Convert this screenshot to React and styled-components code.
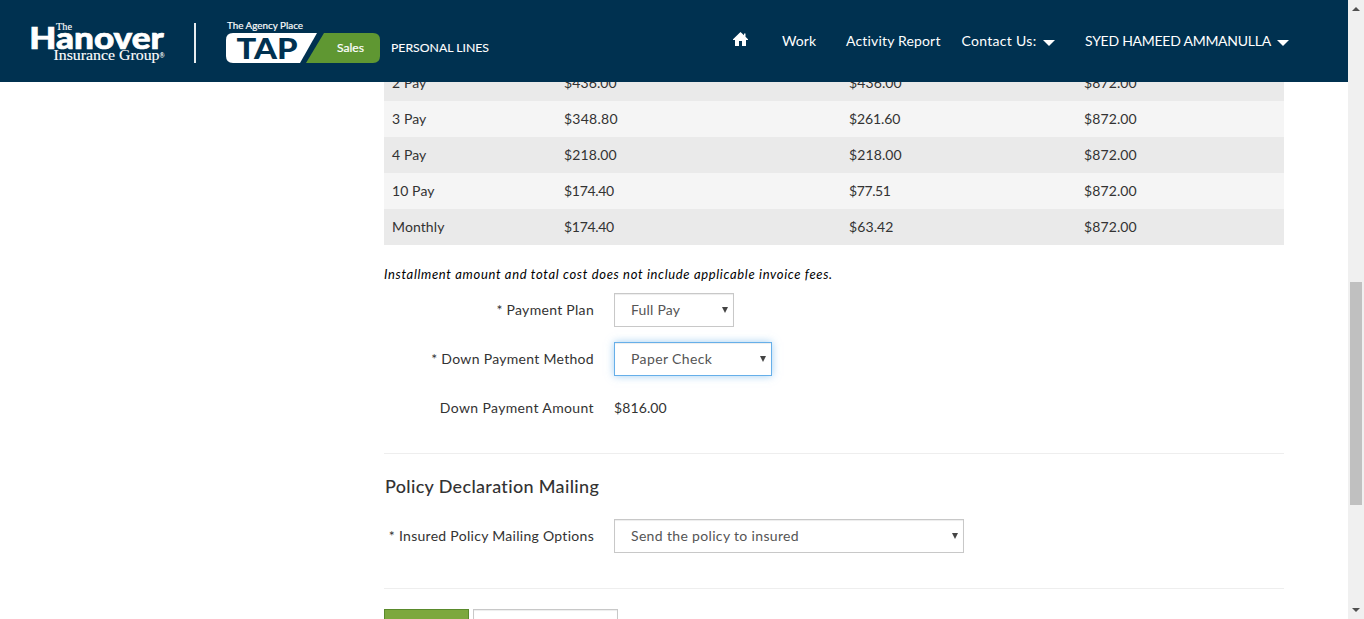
import React from 'react';
import styled, { createGlobalStyle } from 'styled-components';

const GlobalStyle = createGlobalStyle`
  * { box-sizing: border-box; }
  body {
    margin: 0;
    background: #fff;
    color: #333;
    font-family: Lato, "Liberation Sans", sans-serif;
    font-size: 14px;
    line-height: 20px;
    overflow: hidden;
  }
`;

const Viewport = styled.div`
  display: flex;
  height: 619px;
  overflow: hidden;
`;

const Page = styled.div`
  flex: 1;
  min-width: 0;
  height: 619px;
  overflow: hidden;
`;

const Header = styled.header`
  position: fixed;
  top: 0;
  left: 0;
  width: 1348px;
  height: 82px;
  z-index: 2;
  display: flex;
  justify-content: space-between;
  background: #003150;
`;

const Brand = styled.svg`
  flex: none;
`;

const Nav = styled.nav`
  display: flex;
  align-items: flex-start;
  padding: 31px 59px 0 0;
`;

const NavItem = styled.a`
  display: flex;
  align-items: center;
  width: ${(p) => p.$w}px;
  color: #fff;
  letter-spacing: ${(p) => p.$ls ?? 0.3}px;
  white-space: nowrap;
`;

const HomeIcon = styled.svg`
  display: block;
  margin-top: 1px;
`;

const Caret = styled.span`
  margin-left: auto;
  margin-right: ${(p) => p.$gap || 0}px;
  margin-top: 3px;
  border-top: 6px solid #fff;
  border-left: 6px solid transparent;
  border-right: 6px solid transparent;
`;

const Content = styled.main`
  width: 900px;
  margin: 65px 0 0 384px;
`;

const PlanRow = styled.div`
  display: grid;
  grid-template-columns: 172px 285px 235px 1fr;
  height: 36px;
  padding: 8px;
  background: ${(p) => (p.$dark ? '#eaeaea' : '#f5f5f5')};
`;

const Cell = styled.span`
  letter-spacing: ${(p) => p.$ls}px;
`;

const Note = styled.p`
  margin: 19px 0 9px;
  color: #000;
  font-size: 13px;
  font-style: italic;
  letter-spacing: ${(p) => p.$ls}px;
  white-space: nowrap;
`;

const Field = styled.div`
  display: flex;
  align-items: center;
  gap: 20px;
  height: 34px;
  margin-bottom: 15px;
`;

const Label = styled.label`
  width: 210px;
  text-align: right;
  letter-spacing: ${(p) => p.$ls}px;
  white-space: nowrap;
`;

const Value = styled.span`
  letter-spacing: 0.1px;
`;

const Select = styled.div`
  display: flex;
  align-items: center;
  justify-content: space-between;
  width: ${(p) => p.$w}px;
  height: 34px;
  padding: 0 5px 0 16px;
  color: #555;
  letter-spacing: ${(p) => p.$ls}px;
  background: #fff;
  border: 1px solid ${(p) => (p.$focus ? '#66afe9' : '#c8c8c8')};
  box-shadow: inset 0 1px 1px rgba(0, 0, 0, 0.075)${(p) =>
    p.$focus ? ', 0 0 8px rgba(102, 175, 233, 0.6)' : ''};
`;

const SelectArrow = styled.span`
  margin-top: -1px;
  border-top: 6px solid #444;
  border-left: 3px solid transparent;
  border-right: 3px solid transparent;
`;

const Divider = styled.hr`
  height: 1px;
  margin: ${(p) => p.$top}px 0 0;
  border: 0;
  background: #eee;
`;

const Title = styled.h3`
  margin: 20px 0 21px 1px;
  font-size: 18px;
  font-weight: 500;
  line-height: 24px;
  letter-spacing: ${(p) => p.$ls}px;
`;

const Actions = styled.div`
  display: flex;
  gap: 4px;
  margin-top: 20px;
`;

const Button = styled.button`
  width: ${(p) => p.$w}px;
  height: 34px;
  padding: 0;
  border: 1px solid ${(p) => (p.$primary ? '#5a8a2c' : '#c8c8c8')};
  background: ${(p) => (p.$primary ? '#7da83e' : '#fff')};
  box-shadow: ${(p) => (p.$primary ? 'none' : 'inset 0 1px 1px rgba(0, 0, 0, 0.075)')};
`;

const Scrollbar = styled.div`
  display: flex;
  flex-direction: column;
  width: 16px;
  height: 619px;
  background: #f0f0f0;
`;

const ScrollArrow = styled.svg`
  flex: none;
  display: block;
`;

const Thumb = styled.div`
  width: 12px;
  height: 223px;
  margin: 265px 2px auto;
  background: #c0c0c0;
`;

const plans = [
  ['2 Pay', '$436.00', '$436.00', '$872.00'],
  ['3 Pay', '$348.80', '$261.60', '$872.00'],
  ['4 Pay', '$218.00', '$218.00', '$872.00'],
  ['10 Pay', '$174.40', '$77.51', '$872.00'],
  ['Monthly', '$174.40', '$63.42', '$872.00'],
];

const amountSpacing = { '$348.80': 0.25, '$174.40': -0.3, '$77.51': -0.4, '$261.60': -0.1 };
const spacingOf = (amount) => amountSpacing[amount] ?? 0.1;

function Logo() {
  return (
    <Brand width="510" height="82" viewBox="0 0 510 82" fill="#fff">
      <g fontFamily="'Liberation Serif', serif" stroke="#fff" strokeWidth="0.12">
        <text x="56" y="29.5" fontSize="10.5" textLength="16" lengthAdjust="spacingAndGlyphs">The</text>
        <text x="53.5" y="60.4" fontSize="15" textLength="106" lengthAdjust="spacingAndGlyphs">Insurance Group</text>
        <text x="159.5" y="58" fontSize="8" textLength="5" lengthAdjust="spacingAndGlyphs">®</text>
      </g>
      <text x="29.3" y="48.6" fontSize="31" fontFamily="Lato, sans-serif" fontWeight="900" stroke="#fff" strokeWidth="0.7" textLength="134.5" lengthAdjust="spacingAndGlyphs">Hanover</text>
      <rect x="194" y="23" width="2" height="40" fill="#e6ebee" />
      <text x="227" y="29" fontSize="9" fontFamily="Lato, sans-serif" stroke="#fff" strokeWidth="0.15" textLength="76" lengthAdjust="spacingAndGlyphs">The Agency Place</text>
      <path d="M233 33H317L300 63H233Q226 63 226 56V40Q226 33 233 33Z" />
      <path d="M324 33H373Q380 33 380 40V56Q380 63 373 63H306Z" fill="#5f9732" />
      <text x="236.5" y="59" fontSize="29" fontWeight="900" fill="#003150" fontFamily="Lato, sans-serif" textLength="61" lengthAdjust="spacingAndGlyphs">TAP</text>
      <text x="337" y="52" fontSize="11.5" fontFamily="Lato, sans-serif" stroke="#fff" strokeWidth="0.2" textLength="27" lengthAdjust="spacingAndGlyphs">Sales</text>
      <text x="391" y="52" fontSize="12" fontFamily="Lato, sans-serif" stroke="#fff" strokeWidth="0.1" textLength="98" lengthAdjust="spacingAndGlyphs">PERSONAL LINES</text>
    </Brand>
  );
}

export default function App() {
  return (
    <>
      <GlobalStyle />
      <Viewport>
        <Page>
          <Header>
            <Logo />
            <Nav>
              <NavItem $w={49}>
                <HomeIcon width="15" height="14" viewBox="0 0 15 14" fill="#fff">
                  <path d="M7.5 0 0 7.2V8H2V14H6V9H9V14H13V8H15V7.2L12.5 4.8V1.5H11V3.3Z" />
                </HomeIcon>
              </NavItem>
              <NavItem $w={64} $ls={0.1}>Work</NavItem>
              <NavItem $w={115.5} $ls={0.17}>Activity Report</NavItem>
              <NavItem $w={123.5}>Contact Us:<Caret $gap={30} /></NavItem>
              <NavItem $w={204} $ls={-0.26}>SYED HAMEED AMMANULLA<Caret /></NavItem>
            </Nav>
          </Header>
          <Content>
            {plans.map(([name, down, installment, total], i) => (
              <PlanRow key={name} $dark={i % 2 === 0}>
                <Cell $ls={0.1}>{name}</Cell>
                <Cell $ls={spacingOf(down)}>{down}</Cell>
                <Cell $ls={spacingOf(installment)}>{installment}</Cell>
                <Cell $ls={spacingOf(total)}>{total}</Cell>
              </PlanRow>
            ))}
            <Note $ls={0.66}>Installment amount and total cost does not include applicable invoice fees.</Note>
            <Field>
              <Label $ls={0.3}>* Payment Plan</Label>
              <Select $w={120} $ls={0.2}>Full Pay<SelectArrow /></Select>
            </Field>
            <Field>
              <Label $ls={0.3}>* Down Payment Method</Label>
              <Select $w={158} $ls={0.38} $focus>Paper Check<SelectArrow /></Select>
            </Field>
            <Field>
              <Label $ls={0.37}>Down Payment Amount</Label>
              <Value>$816.00</Value>
            </Field>
            <Divider $top={28} />
            <Title $ls={0.33}>Policy Declaration Mailing</Title>
            <Field>
              <Label $ls={0.29}>* Insured Policy Mailing Options</Label>
              <Select $w={350} $ls={0.34}>Send the policy to insured<SelectArrow /></Select>
            </Field>
            <Divider $top={35} />
            <Actions>
              <Button $w={85} $primary aria-label="Continue" />
              <Button $w={145} aria-label="Save" />
            </Actions>
          </Content>
        </Page>
        <Scrollbar>
          <ScrollArrow width="16" height="17" viewBox="0 0 16 17" fill="#505050"><path d="M4 11 8 7 12 11Z" /></ScrollArrow>
          <Thumb />
          <ScrollArrow width="16" height="17" viewBox="0 0 16 17" fill="#505050"><path d="M4 6H12L8 10Z" /></ScrollArrow>
        </Scrollbar>
      </Viewport>
    </>
  );
}
